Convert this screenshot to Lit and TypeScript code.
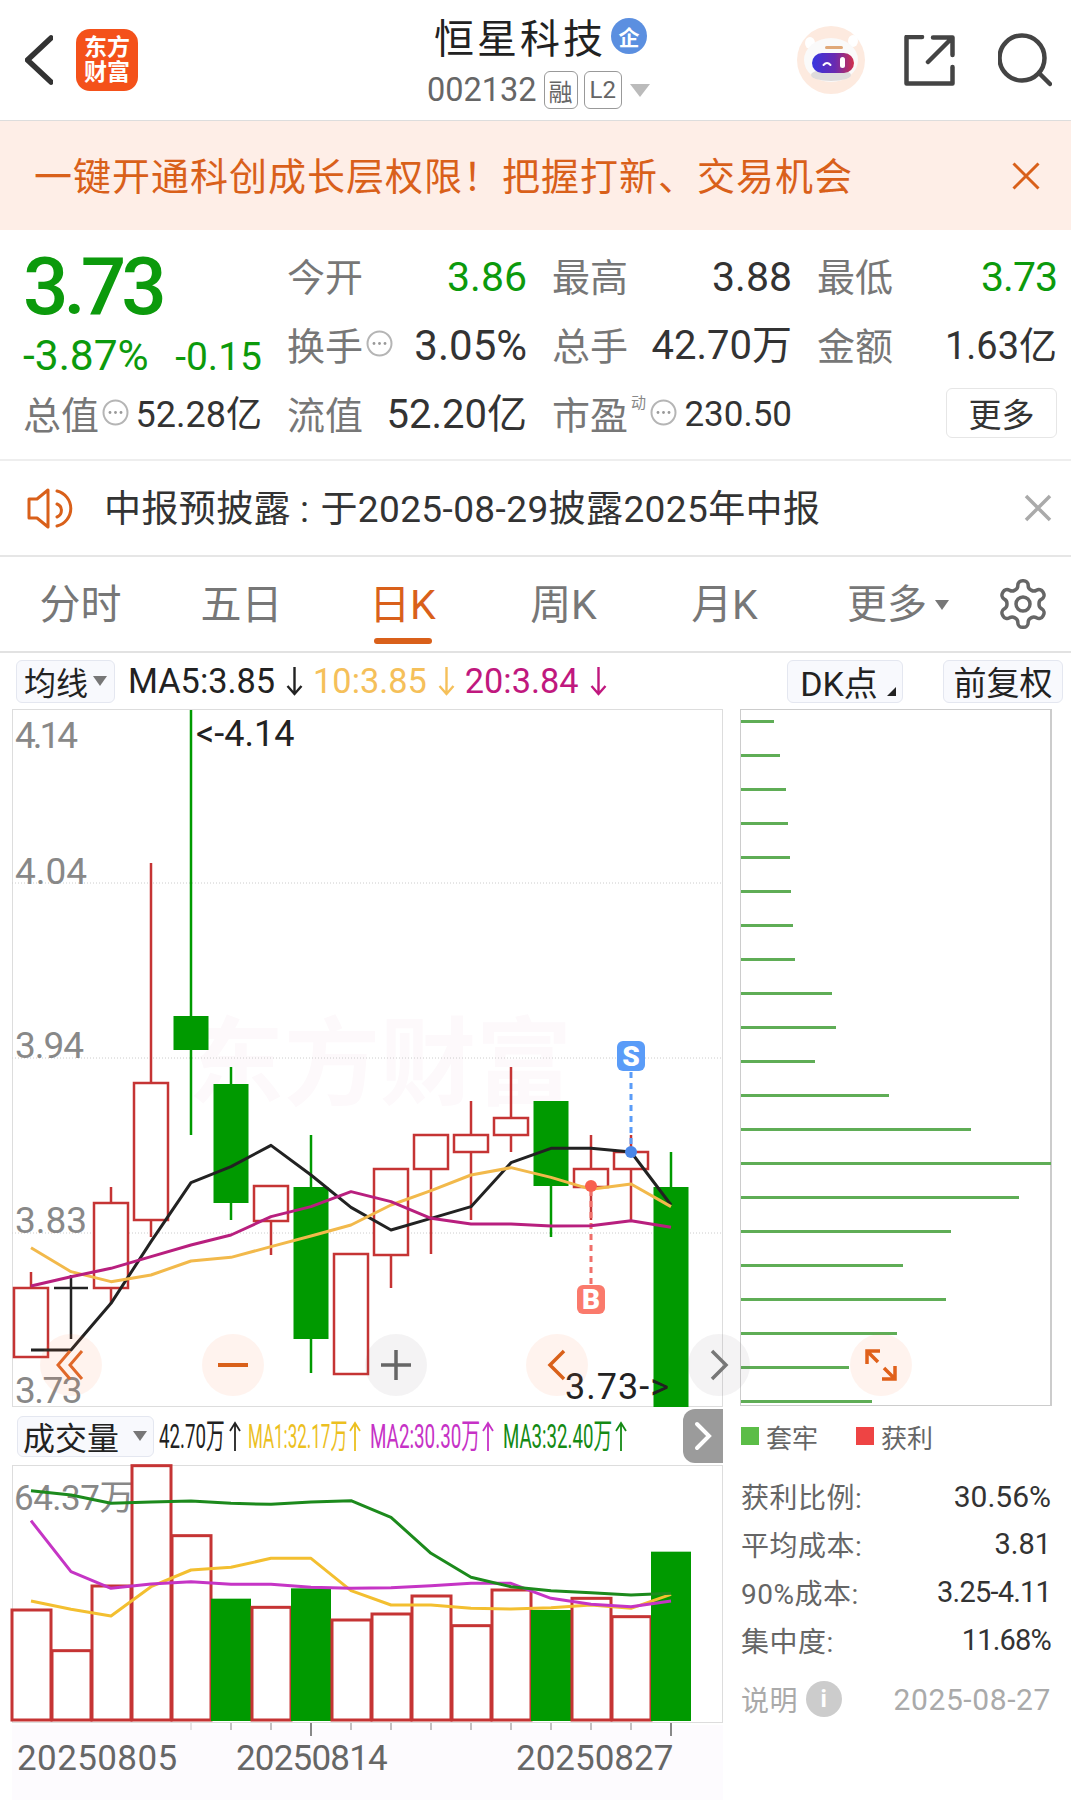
import { LitElement, html, svg, css } from 'lit';
import { customElement } from 'lit/decorators.js';

const RED = '#c53434';
const GREEN = '#009a00';

// candle centres are 40px apart, all y values are page coordinates
const cx = (i: number) => 31 + 40 * i;
const zy = (v: number) => 1000 + v / 3;
const vy = (v: number) => 1400 + v / 3;

const candles = [
  { up: true, top: 1288, bot: 1357, hi: 1272, lo: 1357 },
  null,
  { up: true, top: 1203, bot: 1288, hi: 1187, lo: 1303 },
  { up: true, top: 1083, bot: 1220, hi: 863, lo: 1237 },
  { up: false, top: 1016, bot: 1050, hi: 710, lo: 1135 },
  { up: false, top: 1084, bot: 1203, hi: 1067, lo: 1220 },
  { up: true, top: 1186, bot: 1221, hi: 1186, lo: 1255 },
  { up: false, top: 1187, bot: 1339, hi: 1135, lo: 1373 },
  { up: true, top: 1254, bot: 1374, hi: 1254, lo: 1374 },
  { up: true, top: 1169, bot: 1255, hi: 1169, lo: 1288 },
  { up: true, top: 1135, bot: 1169, hi: 1135, lo: 1254 },
  { up: true, top: 1135, bot: 1152, hi: 1101, lo: 1220 },
  { up: true, top: 1118, bot: 1135, hi: 1067, lo: 1152 },
  { up: false, top: 1101, bot: 1186, hi: 1101, lo: 1237 },
  { up: true, top: 1169, bot: 1187, hi: 1135, lo: 1220 },
  { up: true, top: 1152, bot: 1169, hi: 1135, lo: 1220 },
  { up: false, top: 1187, bot: 1407, hi: 1152, lo: 1407 },
];

const ma5 = [1050, 1050, 910, 725, 548, 500, 436, 525, 622, 690, 655, 620, 488, 445, 445, 456, 615];
const ma10 = [743, 815, 845, 825, 783, 772, 740, 708, 675, 615, 572, 525, 503, 532, 568, 552, 620];
const ma20 = [858, 830, 805, 770, 735, 705, 650, 620, 575, 605, 655, 672, 672, 678, 677, 662, 682];

const axis: [string, number, number][] = [
  ['4.14', 748, -3],
  ['4.04', 884, 0],
  ['3.94', 1058, -1],
  ['3.83', 1233, 0],
  ['3.73', 1403, -1.5],
];

const volTops = [630, 752, 558, 197, 407, 596, 622, 565, 660, 642, 588, 677, 570, 630, 595, 650, 455];
const volDown = [5, 7, 13, 16];
const volGreen = [272, 285, 310, 306, 303, 310, 313, 306, 302, 352, 460, 532, 560, 572, 578, 585, 580];
const volPurple = [362, 515, 565, 552, 545, 553, 553, 562, 565, 563, 557, 550, 550, 595, 613, 620, 603];
const volYellow = [603, 628, 648, 560, 510, 502, 475, 475, 572, 615, 615, 625, 627, 623, 615, 625, 583];

// the legend is squeezed horizontally in the app, sx is the squeeze factor
const volLegend = [
  { t: '42.70万', x: 159, sx: 0.55, a: 235, c: '#222' },
  { t: 'MA1:32.17万', x: 248, sx: 0.5, a: 355, c: '#ecc01f' },
  { t: 'MA2:30.30万', x: 370, sx: 0.554, a: 488, c: '#c632c6' },
  { t: 'MA3:32.40万', x: 503, sx: 0.549, a: 621, c: '#148a14' },
];

const depth = [33, 39, 45, 47, 49, 50, 52, 54, 91, 95, 74, 148, 230, 310, 278, 210, 162, 205, 156, 108, 131];

const line = (vals: number[], toY: (v: number) => number, color: string, w = 3) =>
  svg`<polyline points=${vals.map((v, i) => `${cx(i)},${toY(v)}`).join(' ')} fill="none" stroke=${color} stroke-width=${w} stroke-linejoin="round" />`;

const dots = html`<svg class="dots" viewBox="0 0 27 27"><circle cx="13.5" cy="13.5" r="12" fill="none" stroke="#b5b5b5" stroke-width="2"/><circle cx="8" cy="13.5" r="1.4" fill="#999"/><circle cx="13.5" cy="13.5" r="1.4" fill="#999"/><circle cx="19" cy="13.5" r="1.4" fill="#999"/></svg>`;

const arrowDown = html`<svg class="arrow" viewBox="0 0 19 32"><path d="M9.5 2v27M2.5 21l7 8 7-8" fill="none" stroke="currentColor" stroke-width="2.4"/></svg>`;

@customElement('app-root')
export class AppRoot extends LitElement {
  static styles = css`
    :host {
      display: block;
      width: 1071px;
      height: 1814px;
      background: #fff;
      overflow: hidden;
      font-family: Roboto, 'Noto Sans CJK SC', sans-serif;
      color: #333;
    }
    svg {
      display: block;
      flex: none;
    }

    .header {
      height: 120px;
      border-bottom: 1px solid #ddd;
      display: flex;
      align-items: center;
    }
    .left {
      width: 375px;
      padding-left: 25px;
      display: flex;
      align-items: center;
      gap: 23px;
    }
    .logo {
      width: 62px;
      height: 62px;
      border-radius: 14px;
      background: #f4511a;
      color: #fff;
      font-size: 23px;
      font-weight: 700;
      line-height: 25px;
      text-align: center;
      display: flex;
      flex-direction: column;
      justify-content: center;
    }
    .centre {
      align-self: flex-start;
      padding-top: 8px;
    }
    .title {
      height: 56px;
      padding-left: 34px;
      display: flex;
      align-items: center;
      gap: 5px;
      font-size: 40px;
      letter-spacing: 3px;
      color: #222;
    }
    .qi {
      width: 36px;
      height: 36px;
      border-radius: 50%;
      background: #5b8fe0;
      color: #fff;
      font-size: 21px;
      font-weight: 700;
      letter-spacing: 0;
      display: flex;
      align-items: center;
      justify-content: center;
    }
    .sub {
      height: 52px;
      padding-left: 27px;
      display: flex;
      align-items: center;
      font-size: 32.5px;
      color: #666;
    }
    .tag {
      height: 38px;
      box-sizing: border-box;
      border: 1px solid #999;
      border-radius: 6px;
      font-size: 24px;
      display: flex;
      align-items: center;
      justify-content: center;
      margin-left: 7px;
      padding: 0 4px;
    }
    .tag + .tag {
      margin-left: 6px;
      padding: 0 5px;
    }
    .tri {
      width: 0;
      height: 0;
      border-left: 10px solid transparent;
      border-right: 10px solid transparent;
      border-top: 13px solid #bbb;
      margin-left: 8px;
    }
    .right {
      margin-left: auto;
      padding-right: 19px;
      display: flex;
      align-items: center;
    }
    .share {
      margin-left: 39px;
    }
    .search {
      margin-left: 43px;
    }

    .banner {
      height: 109px;
      background: #feeee7;
      display: flex;
      align-items: center;
      justify-content: space-between;
      padding: 0 31px 0 34px;
      color: #d9601a;
      font-size: 38px;
      letter-spacing: 1px;
    }
    .banner span {
      padding-bottom: 4px;
    }

    .quote {
      box-sizing: border-box;
      height: 231px;
      padding: 10px 14px 0 23px;
      border-bottom: 2px solid #eee;
      display: grid;
      grid-template-columns: 239px 240px 240px 240px;
      grid-auto-rows: 69px;
      column-gap: 25px;
    }
    .head {
      grid-row: 1 / span 2;
      padding-top: 9px;
    }
    .price {
      height: 76px;
      line-height: 76px;
      font-size: 80px;
      font-weight: 500;
      letter-spacing: -5px;
      color: #0c9a0c;
    }
    .change {
      margin-top: 9px;
      height: 44px;
      line-height: 44px;
      font-size: 42.5px;
      color: #0c9a0c;
      display: flex;
      align-items: baseline;
      justify-content: space-between;
    }
    .change span + span {
      font-size: 39px;
    }
    .cell {
      display: flex;
      align-items: center;
      justify-content: space-between;
    }
    .label {
      display: flex;
      align-items: center;
      font-size: 38px;
      color: #777;
    }
    .dots {
      width: 27px;
      height: 27px;
      margin-left: 3px;
    }
    .val {
      font-size: 40px;
      line-height: 44px;
      padding-top: 4px;
      color: #333;
    }
    .val.big {
      font-size: 42px;
    }
    .val.mid {
      font-size: 41px;
    }
    .val.green {
      font-size: 41px;
      color: #0c9a0c;
    }
    .val.narrow {
      letter-spacing: -1px;
    }
    .val.small {
      font-size: 36px;
    }
    .val.pe {
      font-size: 35px;
    }
    .val.amount {
      font-size: 38px;
    }
    .dong {
      align-self: flex-start;
      margin: 11px 1px 0 3px;
      font-size: 15px;
      line-height: 15px;
      color: #888;
    }
    .more-btn {
      margin-left: auto;
      width: 111px;
      height: 50px;
      box-sizing: border-box;
      border: 1px solid #e6e6e6;
      border-radius: 6px;
      font-size: 33px;
      display: flex;
      align-items: center;
      justify-content: center;
    }

    .notice {
      box-sizing: border-box;
      height: 96px;
      border-bottom: 2px solid #e6e6e6;
      padding: 0 19px 0 27px;
      display: flex;
      align-items: center;
      font-size: 37px;
      letter-spacing: 0.4px;
      color: #333;
    }
    .notice span {
      margin-left: 29px;
      padding-bottom: 4px;
      flex: 1;
    }
    .notice .colon {
      margin: 0 11px 0 9px;
      padding: 0;
    }

    .tabs {
      box-sizing: border-box;
      height: 96px;
      border-bottom: 2px solid #e2e2e2;
      display: flex;
    }
    .tab {
      width: 161px;
      padding-top: 21px;
      display: flex;
      flex-direction: column;
      align-items: center;
      font-size: 41px;
      line-height: 54px;
      color: #777;
    }
    .tab.on {
      color: #d9601a;
    }
    .tab.on i {
      display: block;
      width: 58px;
      height: 6px;
      border-radius: 3px;
      background: #d9601a;
      margin-top: 6px;
    }
    .tab .with-tri {
      align-self: flex-start;
      margin-left: 42px;
      display: flex;
      align-items: center;
      gap: 8px;
      font-size: 40px;
    }
    .mini-tri {
      width: 0;
      height: 0;
      border-left: 7px solid transparent;
      border-right: 7px solid transparent;
      border-top: 10px solid #777;
    }
    .gear {
      margin: 19px 0 0 29px;
    }

    .toolbar {
      height: 56px;
      padding: 0 8px 0 16px;
      display: flex;
      align-items: center;
      font-size: 34.3px;
    }
    .pick {
      box-sizing: border-box;
      height: 43px;
      background: #f8f9fd;
      border: 1px solid #e4e7f0;
      border-radius: 6px;
      display: flex;
      align-items: center;
      justify-content: center;
      gap: 5px;
      color: #222;
      position: relative;
    }
    .pick.avg {
      width: 99px;
      margin-right: 13px;
      font-size: 32px;
    }
    .pick.dk {
      width: 116px;
      margin-left: auto;
      padding-right: 12px;
      font-size: 34px;
    }
    .pick.fq {
      width: 120px;
      margin-left: 40px;
      font-size: 33px;
    }
    .corner {
      position: absolute;
      right: 6px;
      bottom: 6px;
      width: 0;
      height: 0;
      border-left: 9px solid transparent;
      border-bottom: 9px solid #222;
    }
    .ma {
      display: flex;
      align-items: center;
      gap: 10px;
      margin-right: 9px;
    }
    .arrow {
      width: 19px;
      height: 32px;
    }
    .ma.black {
      color: #222;
    }
    .ma.yellow {
      color: #f5c05a;
    }
    .ma.pink {
      color: #c0187e;
    }

    .charts {
      display: flex;
      align-items: flex-start;
    }
    .col-left {
      width: 711px;
      margin-left: 12px;
    }
    .main {
      position: relative;
      height: 698px;
    }
    .main svg,
    .volume svg {
      overflow: visible;
    }
    .ax {
      font-size: 37px;
      fill: #888;
    }
    .ax.dark {
      fill: #222;
      font-size: 36px;
    }
    .ax.vol {
      font-size: 35px;
      letter-spacing: -0.5px;
    }
    .wm {
      font-size: 96px;
      font-weight: 700;
      fill: #fdf9fb;
    }
    .mark {
      font-size: 28px;
      font-weight: 900;
      fill: #fff;
    }
    .ctl {
      position: absolute;
      top: 625px;
      width: 62px;
      height: 62px;
      border-radius: 50%;
      display: flex;
      align-items: center;
      justify-content: center;
      background: rgba(250, 120, 70, 0.09);
      z-index: 2;
    }
    .ctl.grey {
      background: rgba(120, 100, 120, 0.08);
    }
    .c1 {
      left: 28px;
    }
    .c2 {
      left: 190px;
    }
    .c3 {
      left: 353px;
    }
    .c4 {
      left: 514px;
    }
    .c5 {
      left: 676px;
    }
    .c6 {
      left: 838px;
    }

    .vol-bar {
      height: 58px;
      display: flex;
      align-items: center;
    }
    .pick.vol {
      width: 137px;
      height: 41px;
      margin-left: 5px;
      justify-content: flex-start;
      padding-left: 5px;
      gap: 14px;
      font-size: 32px;
    }
    .vol-legend {
      margin-left: 5px;
    }
    .vol-legend text {
      font-size: 34px;
    }
    .expand {
      margin-left: auto;
      width: 40px;
      height: 54px;
      background: #9b9b9b;
      border-radius: 12px 0 0 12px;
      display: flex;
      align-items: center;
      justify-content: center;
    }
    .date {
      font-size: 35px;
      fill: #666;
    }

    .col-right {
      width: 312px;
      margin-left: 17px;
    }
    .depth {
      box-sizing: border-box;
      height: 697px;
      border: 1px solid #ccc;
      border-width: 1px 2px 1px 1px;
      padding: 10px 0 2px;
      display: flex;
      flex-direction: column;
      justify-content: space-between;
    }
    .depth i {
      display: block;
      height: 3px;
      background: #5fad56;
    }
    .legend {
      box-sizing: border-box;
      height: 68px;
      padding: 0 0 8px 1px;
      display: flex;
      align-items: center;
      font-size: 26px;
      color: #666;
    }
    .sq {
      width: 18px;
      height: 18px;
      margin-right: 7px;
    }
    .sq.g {
      background: #5bbd47;
    }
    .sq.r {
      background: #ee4444;
      margin-left: 38px;
    }
    .row {
      box-sizing: border-box;
      height: 48px;
      padding: 0 1px 4px 1px;
      display: flex;
      align-items: center;
      justify-content: space-between;
      font-size: 28px;
      letter-spacing: 0.5px;
      color: #666;
    }
    .row b {
      font-weight: 400;
      font-size: 29px;
      letter-spacing: 0;
      color: #333;
    }
    .row b.wide {
      font-size: 30px;
    }
    .row b.tight {
      letter-spacing: -0.8px;
    }
    .row.foot {
      margin-top: 11px;
      color: #aaa;
    }
    .row.foot b {
      font-size: 30px;
      letter-spacing: 0.6px;
      color: #aaa;
    }
    .foot-l {
      display: flex;
      align-items: center;
      gap: 8px;
    }
    .info {
      width: 36px;
      height: 36px;
      border-radius: 50%;
      background: #ccc;
      color: #fff;
      font-size: 24px;
      font-weight: 700;
      display: flex;
      align-items: center;
      justify-content: center;
    }
  `;

  renderHeader() {
    return html`
      <div class="header">
        <div class="left">
          <svg width="28" height="50" viewBox="25 34 28 50"><path d="M51 37 27.5 59 51 81" fill="none" stroke="#333" stroke-width="5.5" stroke-linecap="round" stroke-linejoin="round" /></svg>
          <div class="logo"><span>东方</span><span>财富</span></div>
        </div>
        <div class="centre">
          <div class="title">恒星科技<span class="qi">企</span></div>
          <div class="sub">002132<span class="tag">融</span><span class="tag">L2</span><span class="tri"></span></div>
        </div>
        <div class="right">
          <svg width="68" height="68" viewBox="0 0 68 68">
            <defs>
              <linearGradient id="visor" x1="0" x2="1"><stop offset="0" stop-color="#3636e0" /><stop offset=".55" stop-color="#6a2ab0" /><stop offset="1" stop-color="#d0304c" /></linearGradient>
            </defs>
            <circle cx="34" cy="34" r="34" fill="#fdeadf" />
            <ellipse cx="13" cy="17" rx="5" ry="6" fill="#fff" />
            <ellipse cx="56" cy="15" rx="5" ry="6" fill="#fff" />
            <ellipse cx="34" cy="34" rx="27" ry="22" fill="#fafafa" />
            <ellipse cx="34" cy="49" rx="20" ry="6" fill="#dfdcdc" />
            <rect x="28" y="20" width="18" height="3" rx="1.5" fill="#e0a878" />
            <rect x="15" y="27" width="42" height="20" rx="10" fill="url(#visor)" />
            <path d="M26.5 39q3.5-4 7 0" fill="none" stroke="#fff" stroke-width="2" stroke-linecap="round" />
            <rect x="43" y="31" width="5" height="11" rx="2.5" fill="#fff" />
          </svg>
          <svg class="share" width="51" height="51" viewBox="905 33 51 51"><path d="M923 35H907.5V81.5H953.5V65M929 60 953 36M934 35.5H953.5V53" fill="none" stroke="#444" stroke-width="4.5" stroke-linecap="round" stroke-linejoin="round" /></svg>
          <svg class="search" width="54" height="54" viewBox="999 32 54 54"><circle cx="1023" cy="57" r="22.5" fill="none" stroke="#444" stroke-width="4.5" /><path d="M1041 73 1051 83" stroke="#444" stroke-width="4.5" stroke-linecap="round" /></svg>
        </div>
      </div>
      <div class="banner">
        <span>一键开通科创成长层权限！把握打新、交易机会</span>
        <svg width="28" height="28" viewBox="0 0 28 28"><path d="M1.5 1.5 26.5 26.5M26.5 1.5 1.5 26.5" stroke="#d9601a" stroke-width="3" /></svg>
      </div>
    `;
  }

  renderQuote() {
    return html`
      <div class="quote">
        <div class="head">
          <div class="price">3.73</div>
          <div class="change"><span>-3.87%</span><span>-0.15</span></div>
        </div>
        <div class="cell"><span class="label">今开</span><span class="val green">3.86</span></div>
        <div class="cell"><span class="label">最高</span><span class="val mid">3.88</span></div>
        <div class="cell"><span class="label">最低</span><span class="val green narrow">3.73</span></div>
        <div class="cell"><span class="label">换手${dots}</span><span class="val big">3.05%</span></div>
        <div class="cell"><span class="label">总手</span><span class="val">42.70万</span></div>
        <div class="cell"><span class="label">金额</span><span class="val amount">1.63亿</span></div>
        <div class="cell"><span class="label">总值${dots}</span><span class="val small">52.28亿</span></div>
        <div class="cell"><span class="label">流值</span><span class="val">52.20亿</span></div>
        <div class="cell"><span class="label">市盈<span class="dong">动</span>${dots}</span><span class="val pe">230.50</span></div>
        <div class="cell"><span class="more-btn">更多</span></div>
      </div>
      <div class="notice">
        <svg width="48" height="42" viewBox="27 486 48 42">
          <path d="M48 489 37 498H29V517H37L48 526Z" fill="none" stroke="#d9601a" stroke-width="3" stroke-linejoin="round" />
          <path d="M57 490A18 18 0 0 1 57 525M57 503A7 7 0 0 1 57 516" fill="none" stroke="#d9601a" stroke-width="3" stroke-linecap="round" />
        </svg>
        <span>中报预披露<span class="colon">:</span>于2025-08-29披露2025年中报</span>
        <svg width="28" height="28" viewBox="0 0 28 28"><path d="M2 2 26 26M26 2 2 26" stroke="#aaa" stroke-width="3.5" /></svg>
      </div>
    `;
  }

  renderTabs() {
    return html`
      <div class="tabs">
        <div class="tab">分时</div>
        <div class="tab">五日</div>
        <div class="tab on">日K<i></i></div>
        <div class="tab">周K</div>
        <div class="tab">月K</div>
        <div class="tab"><span class="with-tri">更多<span class="mini-tri"></span></span></div>
        <svg class="gear" width="56" height="56" viewBox="0 0 24 24" fill="none" stroke="#666" stroke-width="1.5">
          <path d="M12.22 2h-.44a2 2 0 0 0-2 2v.18a2 2 0 0 1-1 1.73l-.43.25a2 2 0 0 1-2 0l-.15-.08a2 2 0 0 0-2.73.73l-.22.38a2 2 0 0 0 .73 2.73l.15.1a2 2 0 0 1 1 1.72v.51a2 2 0 0 1-1 1.74l-.15.09a2 2 0 0 0-.73 2.73l.22.38a2 2 0 0 0 2.73.73l.15-.08a2 2 0 0 1 2 0l.43.25a2 2 0 0 1 1 1.73V20a2 2 0 0 0 2 2h.44a2 2 0 0 0 2-2v-.18a2 2 0 0 1 1-1.73l.43-.25a2 2 0 0 1 2 0l.15.08a2 2 0 0 0 2.73-.73l.22-.39a2 2 0 0 0-.73-2.73l-.15-.08a2 2 0 0 1-1-1.74v-.5a2 2 0 0 1 1-1.74l.15-.09a2 2 0 0 0 .73-2.73l-.22-.38a2 2 0 0 0-2.73-.73l-.15.08a2 2 0 0 1-2 0l-.43-.25a2 2 0 0 1-1-1.73V4a2 2 0 0 0-2-2z" />
          <circle cx="12" cy="12" r="3" />
        </svg>
      </div>
      <div class="toolbar">
        <div class="pick avg">均线<span class="mini-tri"></span></div>
        <div class="ma black">MA5:3.85${arrowDown}</div>
        <div class="ma yellow">10:3.85${arrowDown}</div>
        <div class="ma pink">20:3.84${arrowDown}</div>
        <div class="pick dk">DK点<span class="corner"></span></div>
        <div class="pick fq">前复权</div>
      </div>
    `;
  }

  renderMain() {
    return html`
      <div class="main">
        <svg width="711" height="698" viewBox="12 709 711 698">
          <rect x="12.5" y="709.5" width="710" height="697" fill="#fff" stroke="#ddd" />
          <text class="wm" x="188" y="1097">东方财富</text>
          ${[883, 1058, 1233].map((y) => svg`<line x1="12" x2="723" y1=${y} y2=${y} stroke="#ccc" stroke-dasharray="1 2" />`)}
          ${axis.map(([t, y, ls]) => svg`<text class="ax" x="15" y=${y} letter-spacing=${ls}>${t}</text>`)}
          <path d="M54 1288H88M71 1275V1339" stroke="#222" stroke-width="2.5" fill="none" />
          ${candles.map((c, i) => {
            if (!c) return null;
            const color = c.up ? RED : GREEN;
            return svg`
              <line x1=${cx(i)} x2=${cx(i)} y1=${c.hi} y2=${c.lo} stroke=${color} stroke-width="2.5" />
              ${c.up
                ? svg`<rect x=${cx(i) - 17} y=${c.top} width="34" height=${c.bot - c.top} fill="#fff" stroke=${color} stroke-width="2.5" />`
                : svg`<rect x=${cx(i) - 17.5} y=${c.top} width="35" height=${c.bot - c.top} fill=${color} />`}
            `;
          })}
          <line x1="591" x2="591" y1="1190" y2="1285" stroke="#f0706a" stroke-width="3" stroke-dasharray="6 5" />
          <line x1="631" x2="631" y1="1072" y2="1150" stroke="#5a9cf8" stroke-width="3" stroke-dasharray="6 5" />
          ${line(ma5, zy, '#222')}
          ${line(ma10, zy, '#f2b94b')}
          ${line(ma20, zy, '#b81f7e')}
          <circle cx="591" cy="1186" r="6" fill="#f8604e" />
          <circle cx="631" cy="1152" r="6" fill="#4a86e8" />
          <rect x="617" y="1041" width="28" height="30" rx="6" fill="#5a9cf8" />
          <text class="mark" x="631" y="1066" text-anchor="middle">S</text>
          <rect x="577" y="1285" width="28" height="29" rx="6" fill="#fa7a6c" />
          <text class="mark" x="591" y="1309" text-anchor="middle">B</text>
          <text class="ax dark" x="196" y="746">&lt;-4.14</text>
          <text class="ax dark" x="565" y="1399" letter-spacing="1">3.73-&gt;</text>
        </svg>
        <div class="ctl c1"><svg width="32" height="32" viewBox="0 0 32 32"><path d="M15 2 3 16 15 30M27 2 15 16 27 30" fill="none" stroke="#e0682a" stroke-width="3" /></svg></div>
        <div class="ctl c2"><svg width="32" height="32" viewBox="0 0 32 32"><path d="M1 16H31" stroke="#d9601a" stroke-width="4" /></svg></div>
        <div class="ctl c3 grey"><svg width="32" height="32" viewBox="0 0 32 32"><path d="M1 16H31M16 1V31" stroke="#666" stroke-width="3.5" /></svg></div>
        <div class="ctl c4"><svg width="32" height="32" viewBox="0 0 32 32"><path d="M23 2 9 16 23 30" fill="none" stroke="#d9601a" stroke-width="3.5" /></svg></div>
        <div class="ctl c5 grey"><svg width="32" height="32" viewBox="0 0 32 32"><path d="M9 2 23 16 9 30" fill="none" stroke="#777" stroke-width="3.5" /></svg></div>
        <div class="ctl c6"><svg width="32" height="32" viewBox="0 0 32 32"><path d="M2 15V2H15M2 2 13 13M30 17V30H17M30 30 19 19" fill="none" stroke="#e0601a" stroke-width="3.5" /></svg></div>
      </div>
    `;
  }

  renderVolume() {
    return html`
      <div class="vol-bar">
        <div class="pick vol">成交量<span class="mini-tri"></span></div>
        <svg class="vol-legend" width="522" height="58" viewBox="159 1407 522 58">
          ${volLegend.map(
            (l) => svg`
              <text transform="translate(${l.x} 1448) scale(${l.sx} 1)" fill=${l.c}>${l.t}</text>
              <path d="M${l.a} 1451V1423M${l.a - 5} 1431l5-8 5 8" fill="none" stroke=${l.c} stroke-width="1.8" />
            `
          )}
        </svg>
        <div class="expand"><svg width="20" height="30" viewBox="0 0 20 30"><path d="M4 3 16 15 4 27" fill="none" stroke="#fff" stroke-width="4" stroke-linecap="round" /></svg></div>
      </div>
      <div class="volume">
        <svg width="711" height="335" viewBox="12 1465 711 335">
          <rect x="12.5" y="1465.5" width="710" height="257" fill="#fff" stroke="#ddd" />
          <rect x="12" y="1725" width="711" height="75" fill="#fdfbfe" />
          <text class="ax vol" x="14" y="1510">64.37万</text>
          ${volTops.map((v, i) => {
            const x = cx(i) - 19;
            const y = vy(v);
            return volDown.includes(i)
              ? svg`<rect x=${x - 1} y=${y} width="40" height=${1721 - y} fill=${GREEN} />`
              : svg`<rect x=${x} y=${y} width="39" height=${1720 - y} fill="#fff" stroke=${RED} stroke-width="3" fill-opacity=".92" />`;
          })}
          ${line(volYellow, vy, '#f3bf30')}
          ${line(volPurple, vy, '#c535c5')}
          ${line(volGreen, vy, '#1c8a1c')}
          ${[4, 5, 6, 7, 8, 9, 10, 11, 12, 13, 14, 15, 16].map((i) => {
            const major = i === 7 || i === 16;
            return svg`<line x1=${cx(i)} x2=${cx(i)} y1="1723" y2=${major ? 1736 : 1730} stroke=${i === 4 ? '#ccc' : '#888'} stroke-width=${major ? 2 : 1} />`;
          })}
          <text class="date" x="17" y="1770" letter-spacing="0.4">20250805</text>
          <text class="date" x="236" y="1770" letter-spacing="-0.8">20250814</text>
          <text class="date" x="516" y="1770">20250827</text>
        </svg>
      </div>
    `;
  }

  renderSide() {
    return html`
      <div class="col-right">
        <div class="depth">${depth.map((w) => html`<i style="width:${w}px"></i>`)}</div>
        <div class="legend"><span class="sq g"></span>套牢<span class="sq r"></span>获利</div>
        <div class="row"><span>获利比例:</span><b class="wide">30.56%</b></div>
        <div class="row"><span>平均成本:</span><b>3.81</b></div>
        <div class="row"><span>90%成本:</span><b class="tight">3.25-4.11</b></div>
        <div class="row"><span>集中度:</span><b class="tight">11.68%</b></div>
        <div class="row foot">
          <span class="foot-l">说明<span class="info">i</span></span>
          <b>2025-08-27</b>
        </div>
      </div>
    `;
  }

  render() {
    return html`
      ${this.renderHeader()} ${this.renderQuote()} ${this.renderTabs()}
      <div class="charts">
        <div class="col-left">${this.renderMain()} ${this.renderVolume()}</div>
        ${this.renderSide()}
      </div>
    `;
  }
}
